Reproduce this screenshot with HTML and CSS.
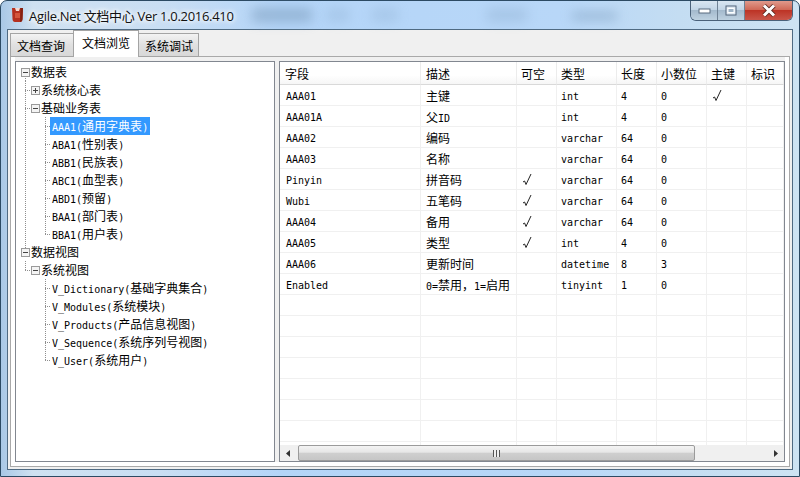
FILE: index.html
```html
<!DOCTYPE html>
<html lang="zh">
<head>
<meta charset="utf-8">
<title>Agile.Net 文档中心</title>
<link rel="stylesheet" href="styles.css">
</head>
<body>
<div class="window">
  <div class="titlebar">
    <i class="blot b1"></i><i class="blot b2"></i><i class="blot b3"></i><i class="blot b4"></i><i class="blot b5"></i>
    <svg class="appicon" width="15" height="16" viewBox="0 0 15 16"><path d="M2 1 H13 L12.5 12 Q12.4 15 10 15 H5 Q2.6 15 2.5 12 Z" fill="#b5301f"/><path d="M5 1 H10 L9 4 H6 Z" fill="#f3d9d2"/><path d="M5 6 H10 V11 H5 Z" fill="#d4553c"/><path d="M10.5 1 H13 L12.5 12 Q12.4 15 10 15 Z" fill="#84200f"/></svg>
    <span class="title">Agile.Net 文档中心 Ver 1.0.2016.410</span>
    <div class="caption">
      <div class="cbtn min"><svg width="13" height="7" viewBox="0 0 13 7"><rect x="1" y="2" width="11" height="4" fill="#fff" stroke="#5a6c80"/></svg></div>
      <div class="cbtn max"><svg width="12" height="11" viewBox="0 0 12 11"><rect x="1" y="1" width="10" height="9" fill="#dfe9f2" stroke="#53657a"/><rect x="3" y="3.5" width="6" height="4" fill="#9db3c6" stroke="#fff"/></svg></div>
      <div class="cbtn close"><svg width="16" height="13" viewBox="0 0 16 13"><path d="M3 1.5 L13 11.5 M13 1.5 L3 11.5" stroke="#5e2a22" stroke-width="4.6"/><path d="M3 1.5 L13 11.5 M13 1.5 L3 11.5" stroke="#fff" stroke-width="3"/></svg></div>
    </div>
  </div>
  <div class="client">
    <div class="tabs">
      <div class="tab tab1">文档查询</div>
      <div class="tab tab2">文档浏览</div>
      <div class="tab tab3">系统调试</div>
    </div>
    <div class="panel">
      <div class="tree">
        <div class="row"><span class="cell down"><b class="box minus"></b></span><span class="lbl0">数据表</span></div>
        <div class="row"><span class="cell t"></span><span class="cell"><b class="box plus"></b></span><span class="lbl1">系统核心表</span></div>
        <div class="row"><span class="cell t"></span><span class="cell"><b class="box minus"></b></span><span class="lbl1">基础业务表</span></div>
        <div class="row"><span class="cell v"></span><span class="cell"></span><span class="cell t"></span><span class="lbl2 sel"><span class="m">AAA1(</span>通用字典表<span class="m">)</span></span></div>
        <div class="row"><span class="cell v"></span><span class="cell"></span><span class="cell t"></span><span class="lbl2"><span class="m">ABA1(</span>性别表<span class="m">)</span></span></div>
        <div class="row"><span class="cell v"></span><span class="cell"></span><span class="cell t"></span><span class="lbl2"><span class="m">ABB1(</span>民族表<span class="m">)</span></span></div>
        <div class="row"><span class="cell v"></span><span class="cell"></span><span class="cell t"></span><span class="lbl2"><span class="m">ABC1(</span>血型表<span class="m">)</span></span></div>
        <div class="row"><span class="cell v"></span><span class="cell"></span><span class="cell t"></span><span class="lbl2"><span class="m">ABD1(</span>预留<span class="m">)</span></span></div>
        <div class="row"><span class="cell v"></span><span class="cell"></span><span class="cell t"></span><span class="lbl2"><span class="m">BAA1(</span>部门表<span class="m">)</span></span></div>
        <div class="row"><span class="cell v"></span><span class="cell"></span><span class="cell l"></span><span class="lbl2"><span class="m">BBA1(</span>用户表<span class="m">)</span></span></div>
        <div class="row"><span class="cell up"><b class="box minus"></b></span><span class="lbl0">数据视图</span></div>
        <div class="row"><span class="cell l"></span><span class="cell"><b class="box minus"></b></span><span class="lbl1">系统视图</span></div>
        <div class="row"><span class="cell"></span><span class="cell"></span><span class="cell t"></span><span class="lbl2"><span class="m">V_Dictionary(</span>基础字典集合<span class="m">)</span></span></div>
        <div class="row"><span class="cell"></span><span class="cell"></span><span class="cell t"></span><span class="lbl2"><span class="m">V_Modules(</span>系统模块<span class="m">)</span></span></div>
        <div class="row"><span class="cell"></span><span class="cell"></span><span class="cell t"></span><span class="lbl2"><span class="m">V_Products(</span>产品信息视图<span class="m">)</span></span></div>
        <div class="row"><span class="cell"></span><span class="cell"></span><span class="cell t"></span><span class="lbl2"><span class="m">V_Sequence(</span>系统序列号视图<span class="m">)</span></span></div>
        <div class="row"><span class="cell"></span><span class="cell"></span><span class="cell l"></span><span class="lbl2"><span class="m">V_User(</span>系统用户<span class="m">)</span></span></div>
      </div>
      <div class="grid">
        <div class="grid-scroll">
          <table>
            <colgroup><col class="c1"><col class="c2"><col class="c3"><col class="c4"><col class="c5"><col class="c6"><col class="c7"><col class="c8"></colgroup>
            <thead><tr><th class="first">字段</th><th class="second">描述</th><th>可空</th><th>类型</th><th>长度</th><th>小数位</th><th>主键</th><th>标识</th></tr></thead>
            <tbody>
              <tr><td class="first">AAA01</td><td class="z">主键</td><td></td><td>int</td><td>4</td><td>0</td><td class="ck"><svg width="10" height="13" viewBox="0 0 10 13"><path d="M1 9 L2.6 8 L4 11.5 L9 1" fill="none" stroke="#222" stroke-width="1"/></svg></td><td></td></tr>
              <tr><td class="first">AAA01A</td><td class="z">父<span class="m">ID</span></td><td></td><td>int</td><td>4</td><td>0</td><td></td><td></td></tr>
              <tr><td class="first">AAA02</td><td class="z">编码</td><td></td><td>varchar</td><td>64</td><td>0</td><td></td><td></td></tr>
              <tr><td class="first">AAA03</td><td class="z">名称</td><td></td><td>varchar</td><td>64</td><td>0</td><td></td><td></td></tr>
              <tr><td class="first">Pinyin</td><td class="z">拼音码</td><td class="ck"><svg width="10" height="13" viewBox="0 0 10 13"><path d="M1 9 L2.6 8 L4 11.5 L9 1" fill="none" stroke="#222" stroke-width="1"/></svg></td><td>varchar</td><td>64</td><td>0</td><td></td><td></td></tr>
              <tr><td class="first">Wubi</td><td class="z">五笔码</td><td class="ck"><svg width="10" height="13" viewBox="0 0 10 13"><path d="M1 9 L2.6 8 L4 11.5 L9 1" fill="none" stroke="#222" stroke-width="1"/></svg></td><td>varchar</td><td>64</td><td>0</td><td></td><td></td></tr>
              <tr><td class="first">AAA04</td><td class="z">备用</td><td class="ck"><svg width="10" height="13" viewBox="0 0 10 13"><path d="M1 9 L2.6 8 L4 11.5 L9 1" fill="none" stroke="#222" stroke-width="1"/></svg></td><td>varchar</td><td>64</td><td>0</td><td></td><td></td></tr>
              <tr><td class="first">AAA05</td><td class="z">类型</td><td class="ck"><svg width="10" height="13" viewBox="0 0 10 13"><path d="M1 9 L2.6 8 L4 11.5 L9 1" fill="none" stroke="#222" stroke-width="1"/></svg></td><td>int</td><td>4</td><td>0</td><td></td><td></td></tr>
              <tr><td class="first">AAA06</td><td class="z">更新时间</td><td></td><td>datetime</td><td>8</td><td>3</td><td></td><td></td></tr>
              <tr><td class="first">Enabled</td><td class="z"><span class="m">0=</span>禁用，<span class="m">1=</span>启用</td><td></td><td>tinyint</td><td>1</td><td>0</td><td></td><td></td></tr>
              <tr><td></td><td></td><td></td><td></td><td></td><td></td><td></td><td></td></tr>
              <tr><td></td><td></td><td></td><td></td><td></td><td></td><td></td><td></td></tr>
              <tr><td></td><td></td><td></td><td></td><td></td><td></td><td></td><td></td></tr>
              <tr><td></td><td></td><td></td><td></td><td></td><td></td><td></td><td></td></tr>
              <tr><td></td><td></td><td></td><td></td><td></td><td></td><td></td><td></td></tr>
              <tr><td></td><td></td><td></td><td></td><td></td><td></td><td></td><td></td></tr>
              <tr><td></td><td></td><td></td><td></td><td></td><td></td><td></td><td></td></tr>
              <tr><td></td><td></td><td></td><td></td><td></td><td></td><td></td><td></td></tr>
            </tbody>
          </table>
        </div>
        <div class="hscroll">
          <div class="sbtn"><svg width="5" height="7" viewBox="0 0 5 7"><path d="M4 0 V7 L0 3.5 Z" fill="#333"/></svg></div>
          <div class="thumb"><span class="grip"></span></div>
          <div class="track"></div>
          <div class="sbtn"><svg width="5" height="7" viewBox="0 0 5 7"><path d="M1 0 V7 L5 3.5 Z" fill="#333"/></svg></div>
        </div>
      </div>
    </div>
  </div>
</div>
</body>
</html>
```
FILE: styles.css
```css
html, body { margin: 0; padding: 0; overflow: hidden; background: #fff; }
* { box-sizing: border-box; }
body { font: 12px "Noto Sans CJK SC", sans-serif; color: #000; }

.window {
  width: 800px; height: 477px;
  display: flex; flex-direction: column;
  padding: 0 6px 6px;
  border: 1px solid #2c4a63; border-radius: 7px 7px 0 0;
  background: linear-gradient(90deg, #a9c8e6 0, #cfe1f1 4%, #c9def3 20%, #b4d5f8 35%, #b8d7f8 70%, #c4ddf2 85%, #cde3f3 100%);
}

.titlebar { position: relative; height: 28px; flex: none; display: flex; align-items: center; }
.blot { position: absolute; top: 7px; height: 14px; background: #7f9fbf; filter: blur(6px); opacity: .6; }
.b1 { left: 245px; width: 60px; }
.b2 { left: 320px; width: 22px; opacity: .25; }
.b3 { left: 365px; width: 26px; opacity: .25; }
.b4 { left: 480px; width: 40px; opacity: .3; }
.b5 { left: 565px; width: 45px; top: 11px; height: 8px; }

.appicon { margin: 0 4px 0 3px; position: relative; flex: none; }
.title {
  position: relative; font: 13px "Open Sans", "Noto Sans CJK SC", sans-serif; letter-spacing: -.3px; color: #111;
  text-shadow: 0 0 5px #fff, 0 0 5px #fff, 0 0 8px #fff;
}

.caption { margin-left: auto; align-self: flex-start; display: flex; height: 20px; position: relative; border-radius: 0 0 6px 6px; border: 1px solid #4a6179; border-top: 0; overflow: hidden; }
.cbtn { display: flex; align-items: center; justify-content: center; height: 100%; }
.min { width: 27px; background: linear-gradient(#d9e6f2 0, #c2d5e6 45%, #a4bacd 50%, #bed1e0 100%); border-right: 1px solid #6f8295; }
.max { width: 27px; background: linear-gradient(#d9e6f2 0, #c2d5e6 45%, #a4bacd 50%, #bed1e0 100%); border-right: 1px solid #6f8295; }
.close { width: 47px; background: linear-gradient(#e09a8c 0, #d06a58 45%, #bd3426 50%, #c9564a 100%); }

.client { flex: 1; display: flex; flex-direction: column; border: 1px solid #4f6a82; background: #f0f0f0; padding: 0 2px 2px; min-height: 0; }

.tabs { flex: none; display: flex; align-items: flex-end; position: relative; z-index: 1; margin-bottom: -1px; height: 27px; }
.tab { height: 24px; line-height: 24px; border: 1px solid #a4a4a4; border-right: 0; background: linear-gradient(#f3f3f3, #e0e0e0 50%, #d8d8d8); }
.tab1 { width: 63px; padding-left: 6px; }
.tab2 { width: 66px; height: 27px; line-height: 24px; padding-left: 8px; background: #fff; border: 1px solid #a4a4a4; border-bottom: 0; }
.tab3 { width: 60px; padding-left: 6px; border-left: 0; border-right: 1px solid #a4a4a4; }

.panel { flex: 1; min-height: 0; display: flex; gap: 4px; padding: 4px; border: 1px solid #a9a9a9; background: linear-gradient(#f0f0f0, #f0f0f0) 4px 0 / calc(100% - 8px) calc(100% - 4px) no-repeat, #fff; }

.tree { width: 260px; flex: none; border: 1px solid #828790; background: #fff; padding: 1px 0 0 4px; }
.row { height: 18px; display: flex; align-items: center; line-height: 18px; white-space: nowrap; }
.cell { width: 10px; height: 18px; flex: none; display: flex; align-items: center; }
.v { background: repeating-linear-gradient(#8f8f8f 0 1px, transparent 1px 2px) 5px 0 / 1px 100% no-repeat; }
.t { background:
  repeating-linear-gradient(#8f8f8f 0 1px, transparent 1px 2px) 5px 0 / 1px 100% no-repeat,
  repeating-linear-gradient(90deg, #8f8f8f 0 1px, transparent 1px 2px) 5px 9px / 5px 1px no-repeat; }
.l { background:
  repeating-linear-gradient(#8f8f8f 0 1px, transparent 1px 2px) 5px 0 / 1px 50% no-repeat,
  repeating-linear-gradient(90deg, #8f8f8f 0 1px, transparent 1px 2px) 5px 9px / 5px 1px no-repeat; }
.down { background: repeating-linear-gradient(#8f8f8f 0 1px, transparent 1px 2px) 5px 100% / 1px 50% no-repeat; }
.up { background: repeating-linear-gradient(#8f8f8f 0 1px, transparent 1px 2px) 5px 0 / 1px 50% no-repeat; }

.box { display: block; width: 9px; height: 9px; margin-left: 1px; border: 1px solid #9a9a9a; background-color: #f4f4f4; }
.minus { background-image: linear-gradient(#444, #444); background-size: 5px 1px; background-position: center; background-repeat: no-repeat; }
.plus { background-image: linear-gradient(#444, #444), linear-gradient(#444, #444); background-size: 5px 1px, 1px 5px; background-position: center, center; background-repeat: no-repeat; }

.lbl0, .lbl1 { margin-left: 1px; }
.lbl2 { padding: 0 2px; height: 18px; }
.sel { background: #3399ff; color: #fff; }
.m { font: 10px "DejaVu Sans Mono", monospace; }

.grid { flex: 1; min-width: 0; display: flex; flex-direction: column; border: 1px solid #828790; background: #fff; }
.grid-scroll { flex: 1; min-height: 0; overflow: hidden; }

table { width: 504px; table-layout: fixed; border-collapse: separate; border-spacing: 0; }
.c1 { width: 141px; } .c2 { width: 96px; } .c3 { width: 40px; } .c4 { width: 60px; }
.c5 { width: 40px; } .c6 { width: 50px; } .c7 { width: 40px; } .c8 { width: 37px; }
th { height: 23px; padding: 0 0 0 4px; font-weight: normal; text-align: left; border-right: 1px solid #ececec; border-bottom: 1px solid #d9d9d9; background: linear-gradient(#fff, #fff 60%, #f6f6f6); overflow: hidden; white-space: nowrap; }
td { height: 21px; padding: 2px 0 0 4px; border-right: 1px solid #f0f0f0; border-bottom: 1px solid #f0f0f0; font: 10px "DejaVu Sans Mono", monospace; white-space: nowrap; overflow: hidden; }
th.first { padding-left: 5px; }
td.first { padding-left: 6px; }
th.second { padding-left: 5px; }
td.z { font: 12px "Noto Sans CJK SC", sans-serif; padding: 0 0 0 5px; }
td.ck { padding: 0 0 0 5px; line-height: 0; vertical-align: middle; }

.hscroll { height: 16px; flex: none; display: flex; background: #f0f0f0; }
.sbtn { width: 17px; flex: none; display: flex; align-items: center; justify-content: center; }
.thumb { width: 397px; margin-left: 1px; flex: none; display: flex; align-items: center; justify-content: center; border: 1px solid #9b9b9b; border-radius: 2px; background: linear-gradient(#f4f4f4, #e6e6e6 45%, #cfcfcf 50%, #c6c6c6); }
.grip { width: 7px; height: 7px; background: repeating-linear-gradient(90deg, #555 0 1px, #eee 1px 3px); }
.track { flex: 1; }
```
